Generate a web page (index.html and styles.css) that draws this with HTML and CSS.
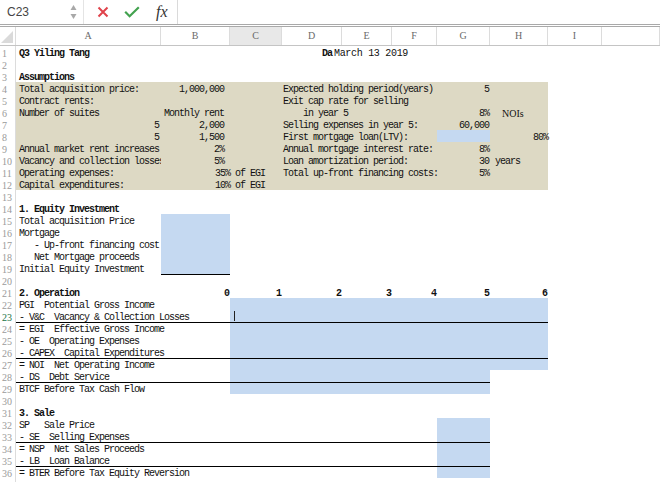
FILE: index.html
```html
<!DOCTYPE html>
<html lang="en">
<head>
    <meta charset="UTF-8">
    <title>Q3 Yiling Tang - Cash flow worksheet</title>
    <link rel="stylesheet" href="styles.css">
</head>
<body>
    <!-- name box + formula bar -->
    <div class="formula-bar">
        <div class="name-box">
            <span class="cell-ref">C23</span>
            <svg class="spin" width="7" height="16" viewBox="0 0 7 16"><path d="M3.5 1L6.5 6H0.5Z"/><path d="M0.5 10H6.5L3.5 15Z"/></svg>
        </div>
        <div class="fb-buttons">
            <svg class="btn-cancel" width="12" height="12" viewBox="0 0 12 12"><path d="M1.5 1.5L10.5 10.5M10.5 1.5L1.5 10.5"/></svg>
            <svg class="btn-enter" width="16" height="12" viewBox="0 0 16 12"><path d="M1.2 5.8L5.6 10.2L14.8 1.2"/></svg>
            <span class="fx">fx</span>
        </div>
        <div class="fb-input"></div>
    </div>

    <!-- column letters -->
    <div class="col-heads">
        <span class="corner"><svg width="12" height="12" viewBox="0 0 12 12"><path d="M12 0V12H0Z"/></svg></span>
        <span>A</span><span>B</span><span class="active">C</span><span>D</span><span>E</span>
        <span>F</span><span>G</span><span>H</span><span>I</span><span></span>
    </div>

    <div class="sheet">
        <div class="row"><span class="n">1</span><span class="col-a bold">Q3 Yiling Tang</span><span class="col-d date-label">Da</span><span class="col-e date">March 13 2019</span></div>
        <div class="row"><span class="n">2</span></div>
        <div class="row"><span class="n">3</span><span class="col-a bold">Assumptions</span></div>

        <!-- assumptions block -->
        <div class="row"><span class="n">4</span><span class="band"></span><span class="col-a">Total acquisition price:</span><span class="col-b acct">1,000,000</span><span class="col-d">Expected holding period(years)</span><span class="col-g val">5</span></div>
        <div class="row"><span class="n">5</span><span class="band"></span><span class="col-a">Contract rents:</span><span class="col-d">Exit cap rate for selling</span></div>
        <div class="row"><span class="n">6</span><span class="band"></span><span class="col-a">Number of suites</span><span class="col-b acct">Monthly rent</span><span class="col-d">    in year 5</span><span class="col-g val">8%</span><span class="col-h note">NOIs</span></div>
        <div class="row"><span class="n">7</span><span class="band"></span><span class="col-a count">5</span><span class="col-b acct">2,000</span><span class="col-d">Selling expenses in year 5:</span><span class="col-g val">60,000</span></div>
        <div class="row"><span class="n">8</span><span class="band"></span><span class="col-g fill"></span><span class="col-a count">5</span><span class="col-b acct">1,500</span><span class="col-d">First mortgage loan(LTV):</span><span class="col-h edge">80%</span></div>
        <div class="row"><span class="n">9</span><span class="band"></span><span class="col-a">Annual market rent increases</span><span class="col-b acct">2%</span><span class="col-d">Annual mortgage interest rate:</span><span class="col-g val">8%</span></div>
        <div class="row"><span class="n">10</span><span class="band"></span><span class="col-a clip">Vacancy and collection losses:</span><span class="col-b acct">5%</span><span class="col-d">Loan amortization period:</span><span class="col-g val">30</span><span class="col-h"> years</span></div>
        <div class="row"><span class="n">11</span><span class="band"></span><span class="col-a">Operating expenses:</span><span class="col-b edge">35%</span><span class="col-c"> of EGI</span><span class="col-d">Total up-front financing costs:</span><span class="col-g val">5%</span></div>
        <div class="row"><span class="n">12</span><span class="band"></span><span class="col-a">Capital expenditures:</span><span class="col-b edge">10%</span><span class="col-c"> of EGI</span></div>
        <div class="row"><span class="n">13</span></div>

        <!-- 1. equity -->
        <div class="row"><span class="n">14</span><span class="col-a bold">1. Equity Investment</span></div>
        <div class="row"><span class="n">15</span><span class="col-b fill"></span><span class="col-a">Total acquisition Price</span></div>
        <div class="row"><span class="n">16</span><span class="col-b fill"></span><span class="col-a">Mortgage</span></div>
        <div class="row"><span class="n">17</span><span class="col-b fill"></span><span class="col-a">   - Up-front financing cost</span></div>
        <div class="row"><span class="n">18</span><span class="col-b fill"></span><span class="col-a">   Net Mortgage proceeds</span></div>
        <div class="row"><span class="n">19</span><span class="col-b fill"></span><span class="col-a">Initial Equity Investment</span></div>
        <div class="row"><span class="n">20</span><span class="col-b rule"></span></div>

        <!-- 2. operation, years 0..6 -->
        <div class="row"><span class="n">21</span><span class="col-a bold">2. Operation</span><span class="col-b year">0</span><span class="col-c year">1</span><span class="col-d year">2</span><span class="col-e year">3</span><span class="col-f year">4</span><span class="col-g year">5</span><span class="col-h year">6</span></div>
        <div class="row"><span class="n">22</span><span class="span-ch fill"></span><span class="col-a">PGI  Potential Gross Income</span></div>
        <div class="row"><span class="n sel">23</span><span class="span-ch fill"></span><span class="col-a">- V&amp;C  Vacancy &amp; Collection Losses</span><span class="col-c caret"></span></div>
        <div class="row"><span class="n">24</span><span class="span-ch fill"></span><span class="span-ah rule"></span><span class="col-a">= EGI  Effective Gross Income</span></div>
        <div class="row"><span class="n">25</span><span class="span-ch fill"></span><span class="col-a">- OE  Operating Expenses</span></div>
        <div class="row"><span class="n">26</span><span class="span-ch fill"></span><span class="col-a">- CAPEX  Capital Expenditures</span></div>
        <div class="row"><span class="n">27</span><span class="span-ch fill"></span><span class="span-ah rule"></span><span class="col-a">= NOI  Net Operating Income</span></div>
        <div class="row"><span class="n">28</span><span class="span-cg fill"></span><span class="col-a">- DS  Debt Service</span></div>
        <div class="row"><span class="n">29</span><span class="span-cg fill"></span><span class="span-ag rule"></span><span class="col-a">BTCF Before Tax Cash Flow</span></div>
        <div class="row"><span class="n">30</span></div>

        <!-- 3. sale -->
        <div class="row"><span class="n">31</span><span class="col-a bold">3. Sale</span></div>
        <div class="row"><span class="n">32</span><span class="col-g fill"></span><span class="col-a">SP   Sale Price</span></div>
        <div class="row"><span class="n">33</span><span class="col-g fill"></span><span class="col-a">- SE  Selling Expenses</span></div>
        <div class="row"><span class="n">34</span><span class="col-g fill"></span><span class="span-ag rule"></span><span class="col-a">= NSP  Net Sales Proceeds</span></div>
        <div class="row"><span class="n">35</span><span class="col-g fill"></span><span class="col-a">- LB  Loan Balance</span></div>
        <div class="row"><span class="n">36</span><span class="col-g fill"></span><span class="span-ag rule"></span><span class="col-a">= BTER Before Tax Equity Reversion</span></div>
        <div class="row"><span class="n">37</span></div>
    </div>
</body>
</html>
```

FILE: styles.css
```css
* {
    margin: 0;
    padding: 0;
    box-sizing: border-box;
}

:root {
    --cols: 16px 145px 69px 52px 60px 50px 45px 53px 58px 54px 1fr;
    --tan: #ddd9c4;
    --blue: #c5d9f1;
}

body {
    width: 660px;
    height: 482px;
    overflow: hidden;
    background: #fff;
    color: #111;
    font-family: "Liberation Mono", monospace;
}

/* ---------- formula bar ---------- */

.formula-bar {
    display: flex;
    height: 27px;
    border-bottom: 3px double #a9a9a9;
}

.name-box {
    width: 84px;
    display: flex;
    align-items: center;
    justify-content: space-between;
    padding: 0 6px 0 7px;
    border-right: 1px solid #e4e4e4;
}

.cell-ref {
    font: 12px "Liberation Sans", sans-serif;
    color: #454545;
}

.spin {
    fill: #a8a8a8;
}

.fb-buttons {
    width: 94px;
    display: flex;
    align-items: center;
    padding-left: 13px;
    border-right: 1px solid #dadada;
}

.btn-cancel path {
    stroke: #e0434b;
    stroke-width: 2;
    fill: none;
}

.btn-enter {
    margin-left: 15px;
}

.btn-enter path {
    stroke: #43a24f;
    stroke-width: 2.2;
    fill: none;
}

.fx {
    margin-left: 16px;
    font: italic 16px "Liberation Serif", serif;
    color: #333;
}

.fb-input {
    flex: 1;
}

/* ---------- column letters ---------- */

.col-heads {
    display: grid;
    grid-template-columns: var(--cols);
    height: 19px;
    border-bottom: 1px solid #c4c4c4;
}

.col-heads span {
    border-right: 1px solid #dcdcdc;
    text-align: center;
    font: 10px/18px "Liberation Serif", serif;
    color: #6a6a6a;
}

.col-heads .active {
    background: #e8e8e8;
}

.col-heads .corner {
    display: flex;
    align-items: flex-end;
    fill: #dadada;
    padding: 0 0 2px 1px;
}

/* ---------- sheet rows ---------- */

.row {
    display: grid;
    grid-template-columns: var(--cols);
    grid-template-rows: 12px;
    height: 12px;
    font-size: 10px;
    line-height: 12px;
    letter-spacing: -1px;
}

.row > * {
    grid-row: 1;
    min-width: 0;
    padding-top: 2px;
    white-space: pre;
}

.n {
    grid-column: 1;
    padding-left: 2px;
    border-right: 1px solid #dcdcdc;
    font-family: "Liberation Serif", serif;
    letter-spacing: 0;
    color: #9a9a9a;
}

.n.sel {
    color: #217346;
}

.col-a { grid-column: 2; padding-left: 3px; }
.col-b { grid-column: 3; }
.col-c { grid-column: 4; }
.col-d { grid-column: 5; padding-left: 1px; }
.col-e { grid-column: 6; }
.col-f { grid-column: 7; }
.col-g { grid-column: 8; }
.col-h { grid-column: 9; }

.span-ch { grid-column: 4 / 10; }
.span-cg { grid-column: 4 / 9; }
.span-ah { grid-column: 2 / 10; }
.span-ag { grid-column: 2 / 9; }

.band {
    grid-column: 2 / 10;
    background: var(--tan);
}

.fill {
    background: var(--blue);
}

/* cell border between two rows, drawn at the top of the lower one */
.rule {
    border-top: 1px solid #000;
}

.bold {
    font-weight: 700;
}

/* text cut at the cell edge, sideways only */
.clip {
    clip-path: inset(-4px 0 -4px 0);
}

/* number alignment */
.acct  { text-align: right; padding-right: 6px; }
.edge  { text-align: right; padding-right: 0; }
.count { text-align: right; padding-right: 2px; }
.val   { text-align: right; padding-right: 1px; }
.year  { text-align: right; padding-right: 1px; font-weight: 700; }

.note {
    padding-left: 12px;
    font-family: "Liberation Serif", serif;
    letter-spacing: 0;
}

.date-label {
    text-align: right;
    padding-right: 10px;
    font-weight: 700;
}

.date {
    display: flex;
    justify-content: center;
    padding-left: 8px;
    letter-spacing: -0.3px;
}

/* text cursor in the cell being edited */
.caret {
    margin: 1px 0 1px 4px;
    width: 1px;
    background: #222;
}
```
